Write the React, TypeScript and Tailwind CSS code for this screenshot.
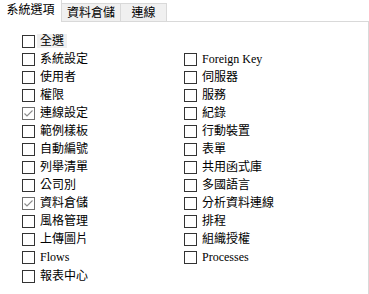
import React from "react";

const left: [string, boolean][] = [
  ["全選", false],
  ["系統設定", false],
  ["使用者", false],
  ["權限", false],
  ["連線設定", true],
  ["範例樣板", false],
  ["自動編號", false],
  ["列舉清單", false],
  ["公司別", false],
  ["資料倉儲", true],
  ["風格管理", false],
  ["上傳圖片", false],
  ["Flows", false],
  ["報表中心", false],
];

const right: string[] = [
  "Foreign Key",
  "伺服器",
  "服務",
  "紀錄",
  "行動裝置",
  "表單",
  "共用函式庫",
  "多國語言",
  "分析資料連線",
  "排程",
  "組織授權",
  "Processes",
];

function Box({ checked }: { checked: boolean }) {
  return (
    <div
      className={
        "w-[13px] h-[13px] shrink-0 border bg-white flex items-center justify-center " +
        (checked ? "border-[#6e6e6e]" : "border-[#333333]")
      }
    >
      {checked && (
        <svg width="11" height="11" viewBox="0 0 11 11">
          <polyline points="1.5,5.5 4,8 9.5,2.5" fill="none" stroke="#8a8a8a" strokeWidth="1.1" />
        </svg>
      )}
    </div>
  );
}

function Row({ label, checked, focus, last }: { label: string; checked: boolean; focus?: boolean; last?: boolean }) {
  return (
    <div className={"h-[18px] flex items-center" + (last ? " mt-[1px]" : "")}>
      <Box checked={checked} />
      {focus ? (
        <span className="ml-[2px] px-[3px] h-[14px] leading-[14px] bg-[#f0f0f0] text-[12px] text-black">{label}</span>
      ) : (
        <span className="ml-[5px] leading-[14px] text-[12px] text-black whitespace-nowrap">{label}</span>
      )}
    </div>
  );
}

export default function App() {
  return (
    <div
      className="w-[369px] h-[294px] bg-white overflow-hidden"
      style={{ fontFamily: '"Liberation Serif", "Noto Sans CJK TC", serif' }}
    >
      <div className="flex items-end h-[21px]">
        <div className="relative z-10 h-[22px] w-[62px] -mb-px bg-white border-r border-[#d9d9d9] flex items-center justify-center text-[12px] text-black pb-[2px]">
          系統選項
        </div>
        <div className="h-[18px] w-[59px] bg-[#f0f0f0] border-t border-r border-[#d9d9d9] flex items-center justify-center text-[12px] text-black">
          資料倉儲
        </div>
        <div className="h-[18px] w-[46px] bg-[#f0f0f0] border-t border-r border-[#d9d9d9] flex items-center justify-center text-[12px] text-black">
          連線
        </div>
      </div>
      <div className="w-[369px] h-[273px] border-t border-r border-[#d9d9d9] pt-[10px] pl-[22px] flex">
        <div className="w-[162px] flex flex-col">
          {left.map(([l, c], i) => (
            <Row key={l} label={l} checked={c} focus={i === 0} last={i === left.length - 1} />
          ))}
        </div>
        <div className="flex flex-col mt-[18px]">
          {right.map((l) => (
            <Row key={l} label={l} checked={false} />
          ))}
        </div>
      </div>
    </div>
  );
}
